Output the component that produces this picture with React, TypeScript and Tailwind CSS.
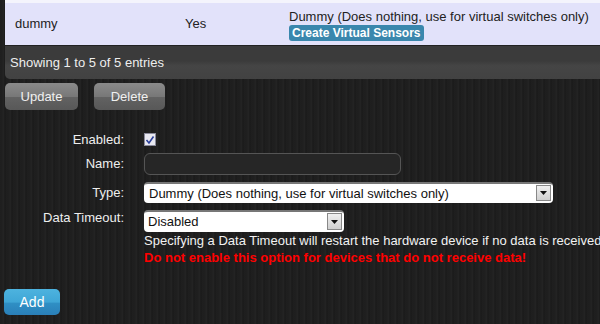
export default function App() {
  const font = { fontFamily: '"Liberation Sans", Arial, sans-serif' };
  return (
    <div
      className="w-[600px] h-[324px] overflow-hidden relative text-[13px] bg-[#1d1d1d] bg-[repeating-linear-gradient(90deg,#1b1b1b_0px,#222222_1px,#1c1c1c_2px,#262626_3px,#1a1a1a_5px,#202020_7px)]"
      style={font}
    >
      {/* table */}
      <div className="ml-[5px]">
        <div className="h-[3px] bg-[#f4f4fc]" />
        <div className="h-[42px] bg-[#e2e2fa] flex items-center text-[#222]">
          <div className="w-[180px] pl-[10px]">dummy</div>
          <div className="w-[104px]">Yes</div>
          <div className="flex flex-col items-start leading-[15px] pt-[2px]">
            <span>Dummy (Does nothing, use for virtual switches only)</span>
            <span className="bg-[#3a87ad] text-white font-bold text-[12px] px-[3px] rounded-[3px] leading-[16px] mt-[1px]">
              Create Virtual Sensors
            </span>
          </div>
        </div>
        <div className="h-px bg-[#222]" />
        <div className="h-[33px] bg-[linear-gradient(180deg,#3b3b3b_0%,#3b3b3b_45%,#454545_60%,#424242_100%)] rounded-bl-[5px] flex items-center pl-[5px] text-[#eee]">
          Showing 1 to 5 of 5 entries
        </div>
      </div>
      {/* buttons */}
      <div className="flex gap-[16px] pl-[5px] mt-[4px]">
        <div className="w-[73px] h-[27px] rounded-[5px] bg-[linear-gradient(180deg,#8a8a8a_0%,#787878_50%,#626262_52%,#585858_100%)] text-[#f0f0f0] flex items-center justify-center text-[13px]">
          Update
        </div>
        <div className="w-[71px] h-[27px] rounded-[5px] bg-[linear-gradient(180deg,#8a8a8a_0%,#787878_50%,#626262_52%,#585858_100%)] text-[#f0f0f0] flex items-center justify-center text-[13px]">
          Delete
        </div>
      </div>
      {/* form */}
      <div className="mt-[22px] grid grid-cols-[124px_1fr] gap-x-[20px] text-[#eee] items-start">
        <div className="text-right h-[15px] leading-[15px]">Enabled:</div>
        <div className="h-[15px] flex items-center">
          <div className="w-[12px] h-[13px] bg-[#e8e8f0] border border-[#8a8a9a] flex items-center justify-center">
            <svg width="10" height="10" viewBox="0 0 10 10">
              <path d="M1.5 5 L4 8 L8.5 1.5" stroke="#2a3f9a" strokeWidth="1.6" fill="none" />
            </svg>
          </div>
        </div>
        <div className="text-right h-[22px] leading-[22px] mt-[6px]">Name:</div>
        <div className="mt-[6px]">
          <div className="w-[257px] h-[22px] rounded-[6px] border border-[#555] bg-[#262626]" />
        </div>
        <div className="text-right leading-[21px] mt-[7px]">Type:</div>
        <div className="mt-[7px]">
          <div className="w-[409px] h-[21px] rounded-[4px] bg-white border-t-2 border-[#999] border-t-[#777] flex items-center text-[#111] pl-[5px] relative">
            <span>Dummy (Does nothing, use for virtual switches only)</span>
            <div className="absolute right-[2px] top-[1px] w-[15px] h-[16px] bg-[linear-gradient(180deg,#f0f0f0,#cfcfcf)] border border-[#888] flex items-center justify-center">
              <svg width="7" height="4" viewBox="0 0 7 4"><path d="M0 0 H7 L3.5 4 Z" fill="#111" /></svg>
            </div>
          </div>
        </div>
        <div className="text-right leading-[15px] mt-[7px]">Data Timeout:</div>
        <div className="mt-[7px]">
          <div className="w-[200px] h-[22px] rounded-[4px] bg-white border-t-2 border-[#999] border-t-[#777] flex items-center text-[#111] pl-[4px] relative">
            <span>Disabled</span>
            <div className="absolute right-[2px] top-[1px] w-[15px] h-[17px] bg-[linear-gradient(180deg,#f0f0f0,#cfcfcf)] border border-[#888] flex items-center justify-center">
              <svg width="7" height="4" viewBox="0 0 7 4"><path d="M0 0 H7 L3.5 4 Z" fill="#111" /></svg>
            </div>
          </div>
        </div>
        <div />
        <div className="leading-[17px] whitespace-nowrap">
          <div className="text-[#f2f2f2]">Specifying a Data Timeout will restart the hardware device if no data is received</div>
          <div className="text-[#ff0000] font-bold">Do not enable this option for devices that do not receive data!</div>
        </div>
      </div>
      <div className="pl-[4px] mt-[23px]">
        <div className="w-[56px] h-[26px] rounded-[5px] bg-[linear-gradient(180deg,#4db3df_0%,#3fa6d6_50%,#2f8fc4_55%,#2a7fb8_100%)] text-white flex items-center justify-center text-[14px]">
          Add
        </div>
      </div>
    </div>
  );
}
